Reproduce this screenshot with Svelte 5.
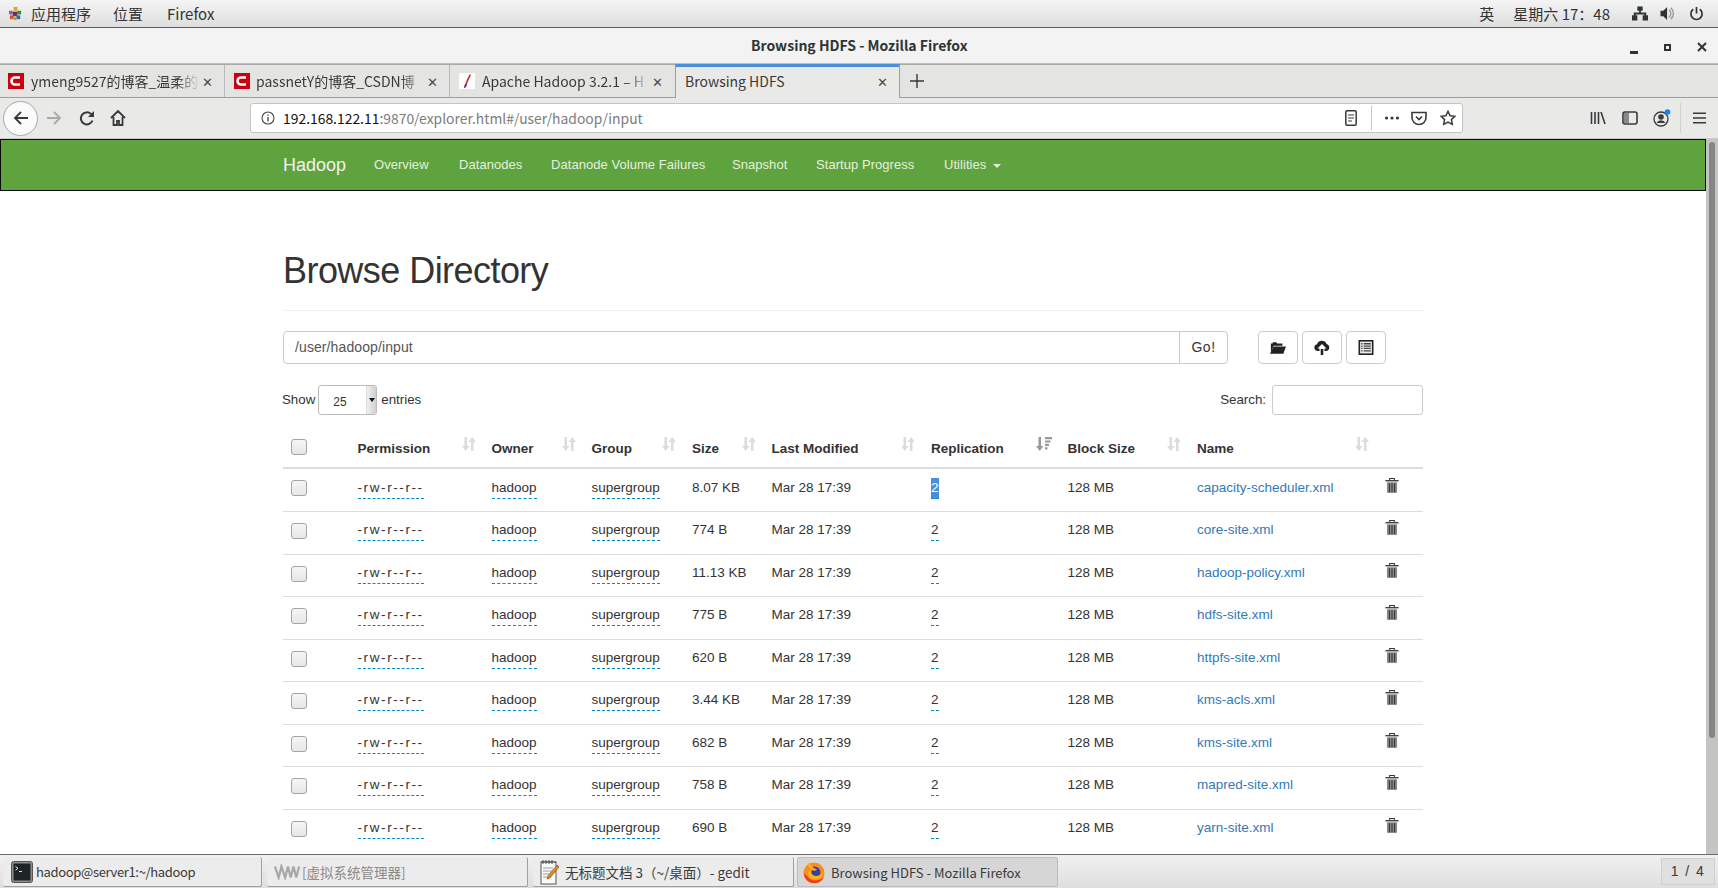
<script>
  const rows = [
    ['8.07 KB', 'capacity-scheduler.xml'],
    ['774 B', 'core-site.xml'],
    ['11.13 KB', 'hadoop-policy.xml'],
    ['775 B', 'hdfs-site.xml'],
    ['620 B', 'httpfs-site.xml'],
    ['3.44 KB', 'kms-acls.xml'],
    ['682 B', 'kms-site.xml'],
    ['758 B', 'mapred-site.xml'],
    ['690 B', 'yarn-site.xml']
  ];
  const heads = [
    ['Permission', 'c-perm'], ['Owner', 'c-owner'], ['Group', 'c-group'], ['Size', 'c-size'],
    ['Last Modified', 'c-mod'], ['Replication', 'c-rep'], ['Block Size', 'c-block'], ['Name', 'c-name']
  ];
  const navs = [
    ['Overview', 'n1'], ['Datanodes', 'n2'], ['Datanode Volume Failures', 'n3'],
    ['Snapshot', 'n4'], ['Startup Progress', 'n5']
  ];
</script>

<div class="screen">
  <header class="topbar">
    <svg class="gnome" viewBox="0 0 16 16">
      <rect x="6" y="1" width="4" height="4" fill="#e5a50a"/><rect x="1" y="5" width="4" height="4" fill="#9b59b6"/>
      <rect x="10" y="5" width="4" height="4" fill="#3b8a3e"/><rect x="5" y="6" width="5" height="5" fill="#5c3566"/>
      <rect x="2" y="10" width="4" height="4" fill="#d0562a"/><rect x="9" y="10" width="4" height="4" fill="#3465a4"/>
      <rect x="6" y="12" width="3" height="3" fill="#c4a000"/>
    </svg>
    <span class="m1">应用程序</span>
    <span class="m2">位置</span>
    <span class="m3">Firefox</span>
    <span class="tspace"></span>
    <span class="m4">英</span>
    <span class="m5">星期六 17：48</span>
    <svg class="net" viewBox="0 0 18 16"><path d="M6 0h6v5H10v2h6v3h2v6h-6v-6h2V9H4v1h2v6H0v-6h2V7h6V5H6z" fill="#2e3436"/></svg>
    <svg class="vol" viewBox="0 0 16 16"><path d="M0 5h3l4-4v14l-4-4H0z" fill="#2e3436"/><path d="M9 4a5 5 0 0 1 0 8M11 2a8 8 0 0 1 0 12" fill="none" stroke="#9a9a9a" stroke-width="1.5"/></svg>
    <svg class="pow" viewBox="0 0 16 16"><path d="M8 1v7M4.500 3.500a6 6 0 1 0 7 0" fill="none" stroke="#2e3436" stroke-width="1.8"/></svg>
  </header>

  <div class="titlebar">
    <span class="wtitle">Browsing HDFS - Mozilla Firefox</span>
    <span class="wbtn b-min"></span>
    <span class="wbtn b-max"></span>
    <svg class="b-close" viewBox="0 0 10 10"><path d="M1 1l8 8M9 1l-8 8" stroke="#2e3436" stroke-width="2"/></svg>
  </div>

  <div class="tabs">
    <div class="tab t1">
      <svg class="fav" viewBox="0 0 16 16"><rect width="16" height="16" fill="#c9000f"/><path d="M12 4.500H7a3.500 3.500 0 0 0 0 7h5" fill="none" stroke="#fff" stroke-width="2.6"/></svg>
      <span class="ttext">ymeng9527的博客_温柔的</span>
      <span class="tx">✕</span>
    </div>
    <div class="tab t2">
      <svg class="fav" viewBox="0 0 16 16"><rect width="16" height="16" fill="#c9000f"/><path d="M12 4.500H7a3.500 3.500 0 0 0 0 7h5" fill="none" stroke="#fff" stroke-width="2.6"/></svg>
      <span class="ttext">passnetY的博客_CSDN博</span>
      <span class="tx">✕</span>
    </div>
    <div class="tab t3">
      <svg class="fav" viewBox="0 0 16 16"><rect width="16" height="16" fill="#fff"/><path d="M11 1c-2 3-4 7-6 14l2-1c1-4 3-8 5-12z" fill="#d22128"/><path d="M5 15l2-1 1-3-2 0z" fill="#6d2a8e"/></svg>
      <span class="ttext">Apache Hadoop 3.2.1 – H</span>
      <span class="tx">✕</span>
    </div>
    <div class="tab active">
      <span class="ttext plain">Browsing HDFS</span>
      <span class="tx">✕</span>
    </div>
    <svg class="plus" viewBox="0 0 14 14"><path d="M7 0v14M0 7h14" stroke="#3a3a3a" stroke-width="1.4"/></svg>
  </div>

  <div class="toolbar">
    <span class="back">
      <svg viewBox="0 0 16 16"><path d="M15 8H2M8 2L2 8l6 6" fill="none" stroke="#3a3a3a" stroke-width="1.8"/></svg>
    </span>
    <svg class="fwd" viewBox="0 0 16 16"><path d="M1 8h13M8 2l6 6-6 6" fill="none" stroke="#a9a9a9" stroke-width="1.8"/></svg>
    <svg class="rel" viewBox="0 0 16 16"><path d="M13.500 10.500A6 6 0 1 1 12 4l1.500 1.500" fill="none" stroke="#3a3a3a" stroke-width="2"/><path d="M15 1v6H9z" fill="#3a3a3a"/></svg>
    <svg class="home" viewBox="0 0 16 16"><path d="M1 8l7-7 7 7M3.500 7v8h3.500v-4h2v4h3.500V7" fill="none" stroke="#3a3a3a" stroke-width="1.8"/></svg>
    <div class="urlbar">
      <svg class="info" viewBox="0 0 14 14"><circle cx="7" cy="7" r="6" fill="none" stroke="#4a4a4a" stroke-width="1.1"/><path d="M7 6v4.500M7 3.400v1.400" stroke="#4a4a4a" stroke-width="1.4"/></svg>
      <span class="url"><b>192.168.122.11</b>:9870/explorer.html#/user/hadoop/input</span>
      <span class="tspace"></span>
      <svg class="reader" viewBox="0 0 12 16"><rect x=".8" y=".8" width="10.4" height="14.4" rx="1.2" fill="none" stroke="#3a3a3a" stroke-width="1.5"/><path d="M3 5h6M3 8h6M3 11h4" stroke="#3a3a3a" stroke-width="1.2"/></svg>
      <span class="usep"></span>
      <svg class="dots" viewBox="0 0 16 4"><circle cx="2.500" cy="2" r="1.6" fill="#3a3a3a"/><circle cx="8" cy="2" r="1.6" fill="#3a3a3a"/><circle cx="13.500" cy="2" r="1.6" fill="#3a3a3a"/></svg>
      <svg class="pocket" viewBox="0 0 16 16"><path d="M1 2.500h14v5a7 7 0 0 1-14 0z" fill="none" stroke="#3a3a3a" stroke-width="1.6"/><path d="M5 6.500l3 3 3-3" fill="none" stroke="#3a3a3a" stroke-width="1.6"/></svg>
      <svg class="star" viewBox="0 0 16 16"><path d="M8 1.300l2.100 4.400 4.800.6-3.500 3.300.9 4.800L8 12.100l-4.300 2.300.9-4.800L1.100 6.300l4.800-.6z" fill="none" stroke="#3a3a3a" stroke-width="1.5"/></svg>
    </div>
    <svg class="lib" viewBox="0 0 16 16"><path d="M1.500 2v12M5 2v12M8.500 2v12M11 2l4 12" stroke="#3a3a3a" stroke-width="1.6" fill="none"/></svg>
    <svg class="side" viewBox="0 0 16 16"><rect x="1" y="2" width="14" height="12" rx="2" fill="none" stroke="#3a3a3a" stroke-width="1.6"/><rect x="2" y="3" width="5" height="10" fill="#3a3a3a" opacity=".55"/></svg>
    <svg class="acct" viewBox="0 0 18 18"><circle cx="8" cy="10" r="7" fill="none" stroke="#3a3a3a" stroke-width="1.3"/><circle cx="8" cy="8" r="2.8" fill="#3a3a3a"/><path d="M3.500 14a5 5 0 0 1 9 0z" fill="#3a3a3a"/><circle cx="14.500" cy="3" r="2.800" fill="#0a84ff"/></svg>
    <span class="tsep"></span>
    <svg class="burger" viewBox="0 0 14 12"><path d="M0 1h14M0 6h14M0 11h14" stroke="#3a3a3a" stroke-width="1.6"/></svg>
  </div>

  <div class="viewport">
    <div class="page">
      <nav class="navbar">
        <span class="brand">Hadoop</span>
        {#each navs as n}
          <span class="navlink {n[1]}">{n[0]}</span>
        {/each}
        <span class="navlink n6">Utilities <i class="caret"></i></span>
      </nav>

      <main class="container">
        <h1>Browse Directory</h1>

        <div class="pathrow">
          <div class="igroup">
            <span class="pinput">/user/hadoop/input</span>
            <span class="go">Go!</span>
          </div>
          <span class="ib first">
            <svg viewBox="0 0 18 14"><path d="M1 13V2.500h2V1h4l1 1.500h6V5H4z" fill="#222"/><path d="M4 6h14l-3 8H0z" fill="#222"/></svg>
          </span>
          <span class="ib">
            <svg viewBox="0 0 16 15"><path d="M3.500 11A3.400 3.400 0 0 1 3 4.300 5 5 0 0 1 12.500 4 3.600 3.600 0 0 1 12.500 11H10.500V8.500H12.500L8 4 3.500 8.500H5.500V11z" fill="#222"/><path d="M6.700 9h2.600v6H6.700z" fill="#222"/></svg>
          </span>
          <span class="ib">
            <svg viewBox="0 0 14 14"><rect width="14" height="14" fill="#222"/><rect x="1.500" y="1.500" width="11" height="11" fill="#eee"/><path d="M2.500 3.500h9M2.500 5.700h9M2.500 7.900h9M2.500 10.100h9" stroke="#444" stroke-width="1.200"/><path d="M4.300 2v10" stroke="#eee"/></svg>
          </span>
        </div>

        <div class="lenrow">
          <span class="show">Show</span>
          <span class="sel"><span class="selv">25</span><span class="arrow"><i></i></span></span>
          <span class="entries">entries</span>
          <span class="tspace"></span>
          <span class="searchl">Search:</span>
          <span class="searchi"></span>
        </div>

        <table>
          <colgroup>
            <col class="w0"/><col class="w1"/><col class="w2"/><col class="w3"/><col class="w4"/>
            <col class="w5"/><col class="w6"/><col class="w7"/><col class="w8"/><col class="w9"/>
          </colgroup>
          <thead>
            <tr>
              <th><input type="checkbox" class="cb"/></th>
              {#each heads as h}
                <th>
                  {h[0]}
                  {#if h[0] === 'Replication'}
                    <svg class="sort" viewBox="0 0 16 14"><path d="M2.500 0H5V9H7.500L3.750 14 0 9H2.500z" fill="#999"/><path d="M9 0h7v2.200H9zM9 3.400h5.500v2.200H9zM9 6.800h4v2.200H9zM9 10.200h2.500v2.200H9z" fill="#999"/></svg>
                  {:else}
                    <svg class="sort" viewBox="0 0 14 14"><path d="M2.500 0H5V9H7.500L3.750 14 0 9H2.500z" fill="#dcdcdc"/><path d="M9 14h2.500V5H14L10.250 0 6.500 5H9z" fill="#dcdcdc"/></svg>
                  {/if}
                </th>
              {/each}
              <th></th>
            </tr>
          </thead>
          <tbody>
            {#each rows as r, i}
              <tr>
                <td><input type="checkbox" class="cb"/></td>
                <td><span class="ed perm">-rw-r--r--</span></td>
                <td><span class="ed">hadoop</span></td>
                <td><span class="ed">supergroup</span></td>
                <td>{r[0]}</td>
                <td>Mar 28 17:39</td>
                <td><span class="ed" class:picked={i === 0}>2</span></td>
                <td>128 MB</td>
                <td><span class="link">{r[1]}</span></td>
                <td>
                  <svg class="trash" viewBox="0 0 14 16">
                    <path d="M4.500 2.200V.6h5v1.600" fill="none" stroke="#333" stroke-width="1.100"/>
                    <path d="M0 2.200h14v1.400H0z" fill="#333"/>
                    <path d="M1.600 4.600h10.800V15a1 1 0 0 1-1 1H2.600a1 1 0 0 1-1-1z" fill="#8c8c8c"/>
                    <path d="M4.200 5.500v9.500M7 5.500v9.500M9.800 5.500v9.500" stroke="#2f2f2f" stroke-width="1.100"/>
                  </svg>
                </td>
              </tr>
            {/each}
          </tbody>
        </table>
      </main>
    </div>
    <div class="scrollbar"><span class="thumb"></span></div>
  </div>

  <footer class="taskbar">
    <div class="task k1">
      <svg class="ti" viewBox="0 0 22 22"><rect x=".5" y=".5" width="21" height="21" rx="2" fill="#8a8f8c" stroke="#555"/><rect x="2.500" y="2.500" width="17" height="17" fill="#1f2424"/><path d="M4.500 5.500l2.500 1.800-2.500 1.800M8 10.500h3" stroke="#e5e5e5" stroke-width="1" fill="none"/></svg>
      <span>hadoop@server1:~/hadoop</span>
    </div>
    <div class="task k2">
      <svg class="ti vmm" viewBox="0 0 28 16"><path d="M1 2l4 12 3-12 4 12 3-12 3 12 3-12 3 12 3-12" fill="none" stroke="#a8a8a8" stroke-width="2.400"/></svg>
      <span class="dim">[虚拟系统管理器]</span>
    </div>
    <div class="task k3">
      <svg class="ti gedit" viewBox="0 0 20 26"><rect x="1" y="3" width="15" height="22" fill="#fbfbf6" stroke="#555"/><path d="M1 3h15M3 1v4M6 1v4M9 1v4M12 1v4" stroke="#555"/><path d="M3 9h10M3 12h9M3 15h7M3 18h5" stroke="#9a9a9a"/><path d="M17 6l2 2-9 11-3 1 1-3z" fill="#e08a2c" stroke="#7a4a14" stroke-width=".6"/></svg>
      <span>无标题文档 3（~/桌面）- gedit</span>
    </div>
    <div class="task k4">
      <svg class="ti ff" viewBox="0 0 24 24"><circle cx="12" cy="13" r="10.500" fill="#ff8a1f"/><circle cx="12.500" cy="12.500" r="6" fill="#3a3f9e"/><path d="M7 2c-1 3-1 5 1 7-3 2-3 8 2 10 6 2 11-2 11-8-1 3-4 5-7 5-3 0-6-3-4-6 2 1 4 1 5-1-3 0-5-2-8-7z" fill="#ffb01f"/><path d="M2 13c0 6 5 10 10 10s8-2 10-6c-4 4-13 5-16 0-2-2-3-3-4-4z" fill="#e8401c"/></svg>
      <span>Browsing HDFS - Mozilla Firefox</span>
    </div>
    <span class="tspace"></span>
    <div class="pager">1 / 4</div>
  </footer>
</div>

<style>
  :global(body) { margin: 0; background: #fff; overflow: hidden; }
  .screen {
    width: 1718px; height: 888px; display: flex; flex-direction: column; overflow: hidden;
    font-family: "Noto Sans CJK SC", "Noto Sans", sans-serif; color: #2e3436;
  }
  .tspace { flex: 1; }
  svg { display: block; flex: none; }

  .topbar {
    height: 27px; flex: none; display: flex; align-items: center; font-size: 15px; color: #333;
    background: linear-gradient(#f4f4f4, #dedede); border-bottom: 1px solid #5c5c5c;
  }
  .gnome { width: 15px; height: 15px; margin-left: 8px; }
  .m1 { margin-left: 8px; }
  .m2 { margin-left: 22px; }
  .m3 { margin-left: 24px; }
  .m5 { margin-left: 19px; }
  .net { width: 16px; height: 15px; margin-left: 22px; }
  .vol { width: 16px; height: 15px; margin-left: 12px; }
  .pow { width: 15px; height: 15px; margin-left: 13px; margin-right: 14px; }

  .titlebar {
    height: 36px; flex: none; display: flex; align-items: center; position: relative;
    background: #f3f3f3; border-bottom: 1px solid #bdbdbd; box-sizing: border-box;
    padding-bottom: 1px;
  }
  .wtitle { margin-left: 751px; font-size: 14px; font-weight: 700; color: #2e3436; white-space: nowrap; }
  .b-min { position: absolute; left: 1630px; top: 23px; width: 8px; height: 3px; background: #2e3436; }
  .b-max { position: absolute; left: 1664px; top: 16px; width: 3px; height: 3px; border: 2px solid #2e3436; }
  .b-close { position: absolute; left: 1697px; top: 14px; width: 10px; height: 10px; }

  .tabs {
    height: 34px; flex: none; display: flex; align-items: stretch; background: #e4e4e3;
    border-top: 1px solid #a9a9a9; border-bottom: 1px solid #9e9e9e; box-sizing: border-box; font-size: 14px; color: #3a3a3a;
  }
  .tab { width: 224px; display: flex; align-items: center; padding-left: 8px; box-sizing: border-box; position: relative; }
  .t2, .t3 { width: 225px; padding-left: 9px; border-left: 1px solid #b9b9b9; }
  .t3 { width: 226px; }
  .tab.active {
    width: 225px; padding-left: 9px; padding-bottom: 3px; background: #e9e9e8; border-top: 3px solid #4a90d9; margin-top: -1px;
    margin-bottom: -1px; border-left: 1px solid #9e9e9e; border-right: 1px solid #9e9e9e;
  }
  .fav { width: 16px; height: 16px; margin-right: 7px; }
  .t2 .fav { margin-right: 6px; }
  .ttext {
    flex: 1; overflow: hidden; white-space: nowrap; min-width: 0;
    -webkit-mask-image: linear-gradient(90deg, #000 86%, transparent 100%);
    mask-image: linear-gradient(90deg, #000 86%, transparent 100%);
  }
  .ttext.plain { -webkit-mask-image: none; mask-image: none; }
  .tx { width: 14px; margin-right: 10px; text-align: center; flex: none; font-size: 13px; color: #4a4a4a; }
  .t3 .tx { margin-right: 11px; }
  .plus { width: 14px; height: 14px; align-self: center; margin-left: 10px; }

  .toolbar {
    height: 41px; flex: none; display: flex; align-items: center; background: #e9e9e8; box-sizing: border-box;
    border-bottom: 1px solid #c9c9c9;
  }
  .back {
    width: 33px; height: 33px; margin-left: 3px; border-radius: 50%; border: 1px solid #a8a8a8; background: #fbfbfb;
    display: flex; align-items: center; justify-content: center;
  }
  .back svg { width: 16px; height: 16px; }
  .fwd { width: 16px; height: 16px; margin-left: 8px; }
  .rel { width: 16px; height: 16px; margin-left: 17px; }
  .home { width: 16px; height: 16px; margin-left: 15px; }
  .urlbar {
    width: 1213px; height: 30px; margin-left: 124px; background: #fff; border: 1px solid #c4c4c4; border-radius: 3px;
    display: flex; align-items: center; box-sizing: border-box; font-size: 13.900px;
  }
  .info { width: 14px; height: 14px; margin-left: 10px; }
  .url { margin-left: 8px; color: #7d7d7d; white-space: nowrap; }
  .url b { font-weight: 400; color: #111; }
  .reader { width: 12px; height: 16px; }
  .usep { width: 1px; height: 24px; background: #c4c4c4; margin-left: 14px; }
  .dots { width: 16px; height: 4px; margin-left: 12px; }
  .pocket { width: 16px; height: 16px; margin-left: 11px; }
  .star { width: 16px; height: 16px; margin-left: 13px; margin-right: 6px; }
  .lib { width: 16px; height: 16px; margin-left: 127px; }
  .side { width: 16px; height: 16px; margin-left: 16px; }
  .acct { width: 18px; height: 18px; margin-left: 15px; }
  .tsep { width: 1px; height: 30px; background: #d0d0d0; margin-left: 9px; }
  .burger { width: 13px; height: 12px; margin-left: 12px; }

  .viewport { flex: 1; min-height: 0; display: flex; overflow: hidden; }
  .page {
    flex: 1; min-width: 0; background: #fff; overflow: hidden; color: #333;
    font-family: "Liberation Sans", Arial, sans-serif; font-size: 14px; line-height: 20px;
  }
  .scrollbar { width: 12px; flex: none; background: #c4c4c2; padding: 3px 3px 0 3px; box-sizing: border-box; }
  .thumb { display: block; width: 6px; height: 596px; border-radius: 3px; background: #858585; }

  .navbar {
    height: 52px; box-sizing: border-box; background: #5fa33e; border: 1px solid #0a0a0a; display: flex; align-items: center;
    color: #fff; padding-left: 282px;
  }
  .brand { font-size: 18px; width: 91px; color: #f2f2f2; padding-bottom: 1px; }
  .navlink { font-size: 13px; letter-spacing: .05px; color: #e6f0df; white-space: nowrap; }
  .n1 { width: 85px; } .n2 { width: 92px; } .n3 { width: 181px; } .n4 { width: 84px; } .n5 { width: 128px; }
  .caret {
    display: inline-block; width: 0; height: 0; margin-left: 3px; vertical-align: middle;
    border-top: 4px solid #e6f0df; border-left: 4px solid transparent; border-right: 4px solid transparent;
  }

  .container { width: 1140px; margin-left: 283px; padding-top: 60px; }
  h1 {
    margin: 0; font-size: 36px; font-weight: 400; line-height: 40px; color: #333; padding-bottom: 19px; border-bottom: 1px solid #eee;
    letter-spacing: -.55px;
  }
  .pathrow { display: flex; margin-top: 20px; height: 33px; }
  .igroup { width: 945px; display: flex; box-sizing: border-box; border: 1px solid #ccc; border-radius: 4px; }
  .pinput { flex: 1; padding: 5px 11px; letter-spacing: .1px; color: #555; }
  .go { width: 48px; box-sizing: border-box; border-left: 1px solid #ccc; text-align: center; line-height: 31px; letter-spacing: .5px; }
  .ib {
    width: 40px; height: 33px; box-sizing: border-box; border: 1px solid #ccc; border-radius: 4px; margin-left: 4px;
    display: flex; align-items: center; justify-content: center;
  }
  .ib.first { margin-left: 30px; }
  .ib svg { width: 16px; height: 15px; }
  .lenrow { display: flex; align-items: center; height: 30px; margin-top: 21px; font-size: 13.300px; }
  .show { margin-left: -1px; }
  .sel {
    width: 59px; height: 30px; margin-left: 3px; box-sizing: border-box; border: 1px solid #bbb; border-radius: 3px;
    display: flex; background: #fff; font-size: 12px;
  }
  .selv { flex: 1; padding: 6px 0 0 14px; }
  .arrow { width: 9px; background: linear-gradient(90deg, #f0f0f0, #cfcfcf); border-left: 1px solid #ddd; display: flex; align-items: center; justify-content: center; }
  .arrow i { width: 0; height: 0; border-top: 4px solid #111; border-left: 3px solid transparent; border-right: 3px solid transparent; }
  .entries { margin-left: 4px; }
  .searchl { margin-right: 6px; }
  .searchi { width: 151px; height: 30px; box-sizing: border-box; border: 1px solid #ccc; border-radius: 3px; }

  table { width: 1140px; border-collapse: collapse; table-layout: fixed; margin-top: 10px; }
  .w0 { width: 66.500px; } .w1 { width: 134px; } .w2 { width: 100px; } .w3 { width: 100.500px; } .w4 { width: 79.500px; }
  .w5 { width: 159.500px; } .w6 { width: 136.500px; } .w7 { width: 129.500px; } .w8 { width: 188px; } .w9 { width: 46px; }
  th {
    position: relative; text-align: left; font-weight: 700; font-size: 13.500px; padding: 8px 8px 8px; height: 43px; box-sizing: border-box;
    vertical-align: bottom; border-bottom: 2px solid #ddd; white-space: nowrap;
  }
  td { padding: 8px; height: 42.500px; box-sizing: border-box; vertical-align: top; border-top: 1px solid #ddd; font-size: 13.500px; white-space: nowrap; }
  tbody tr:first-child td { border-top: 0; padding-top: 9px; height: 43.500px; }
  .sort { position: absolute; right: 8px; top: 12px; width: 14px; height: 14px; }
  th:nth-child(7) .sort { width: 16px; }
  .cb {
    appearance: none; -webkit-appearance: none; width: 16px; height: 16px; margin: 3px 0 0; display: block; box-sizing: border-box;
    border: 1.500px solid #a5a5a0; border-radius: 3px; background: linear-gradient(#f6f6f6, #e6e6e6);
  }
  th .cb { margin: 0 0 4px; }
  tbody tr:first-child .cb { margin-top: 2px; }
  .ed { display: inline-block; border-bottom: 1px dashed #0088cc; }
  .perm { letter-spacing: 1.600px; }
  .picked { background: #4a90d9; color: #fff; }
  .link { color: #337ab7; }
  .trash { width: 14px; height: 15px; margin-top: 0; }

  .taskbar {
    height: 34px; flex: none; display: flex; align-items: stretch; box-sizing: border-box; border-top: 1px solid #6a6a6a;
    background: linear-gradient(#f1f1f1, #dedede); padding-top: 2px; font-size: 13px; color: #3a3a3a;
  }
  .task {
    width: 261px; height: 30px; margin-left: 5px; box-sizing: border-box; display: flex; align-items: center; background: #ececec;
    border-right: 1px solid #a0a0a0; border-bottom: 1px solid #a0a0a0; border-radius: 2px; white-space: nowrap;
  }
  .k1 { margin-left: 3px; width: 259px; letter-spacing: -.35px; }
  .k2, .k3 { font-size: 13.500px; }
  .k4 { background: #d6d6d6; border: 1px solid #bcbcbc; margin-left: 3px; }
  .ti { width: 22px; height: 22px; }
  .k1 .ti { margin: 0 3px 0 8px; }
  .vmm { width: 26px; height: 16px; margin: 0 2px 0 7px; }
  .gedit { width: 20px; height: 26px; margin: 0 5px 0 7px; }
  .ff { width: 24px; height: 24px; margin: 0 5px 0 4px; }
  .dim { color: #8a8a8a; }
  .pager {
    width: 54px; height: 27px; margin: 1px 3px 0 0; box-sizing: border-box; border: 1px solid #cfcfcf; background: #e0e0e0;
    text-align: center; line-height: 25px; font-size: 14px; letter-spacing: 1.500px; font-family: "Liberation Sans", sans-serif;
  }
</style>
